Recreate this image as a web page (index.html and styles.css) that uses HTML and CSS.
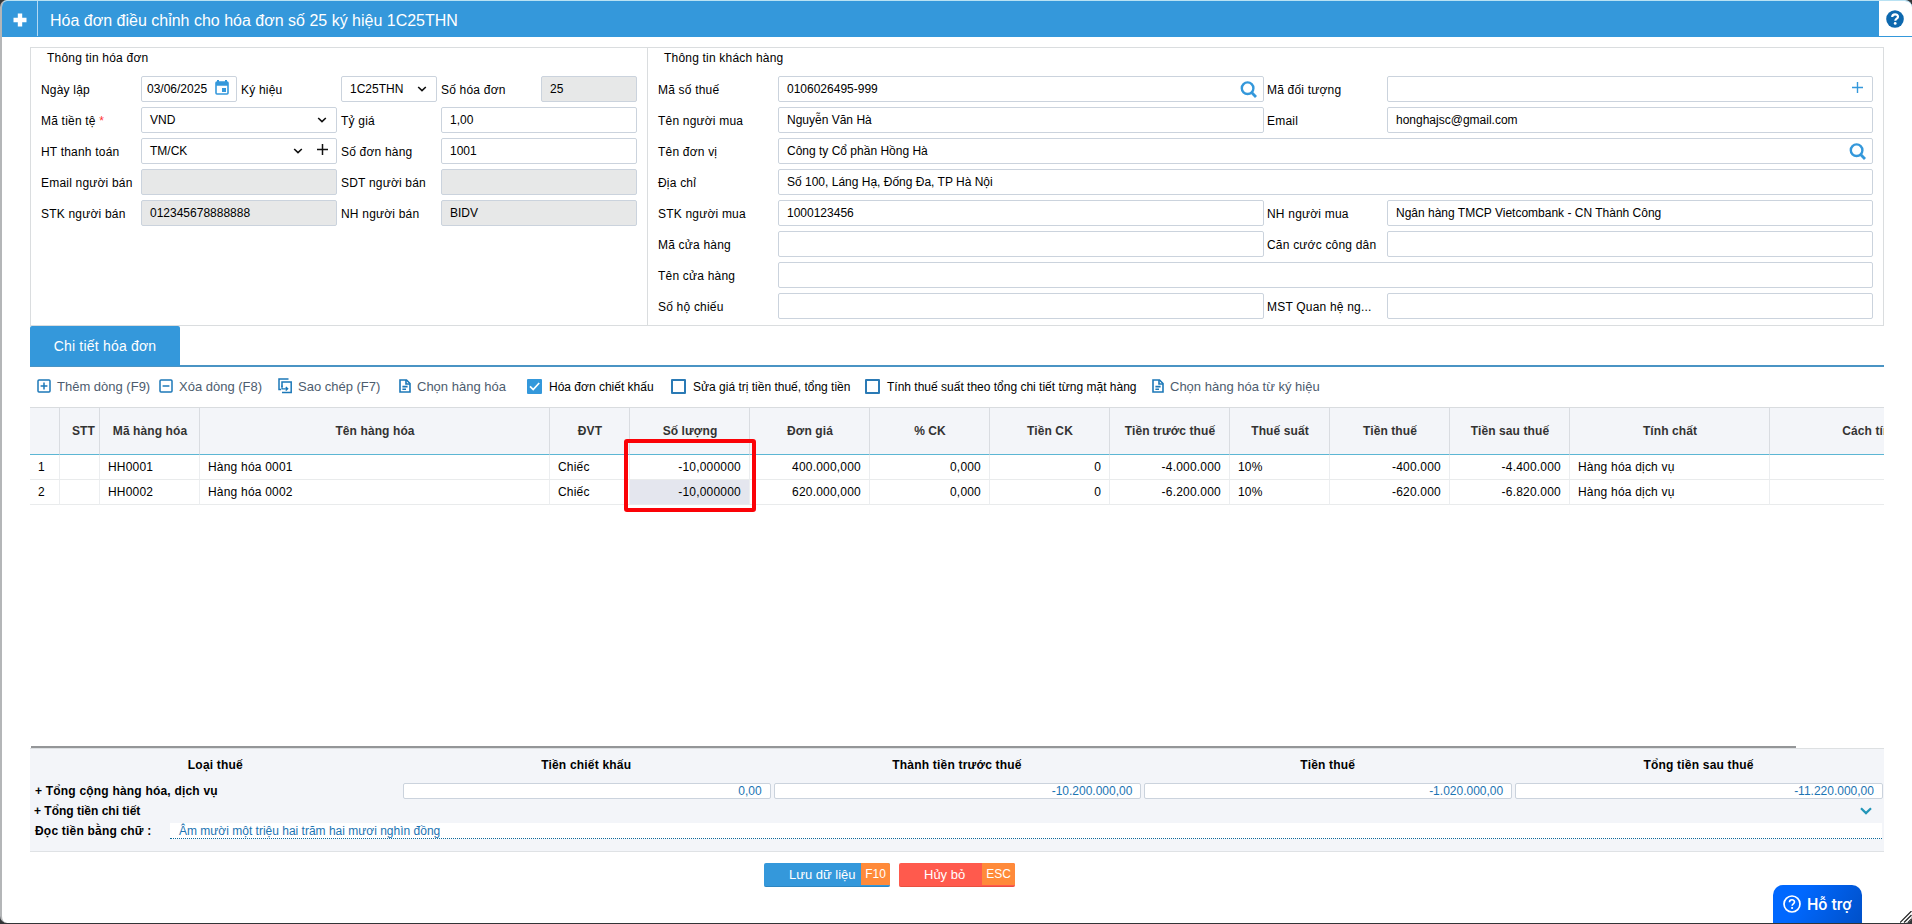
FILE: index.html
```
<!doctype html>
<html lang="vi">
<head>
    <meta charset="UTF-8">
    <title>Hóa đơn điều chỉnh</title>
    <link rel="stylesheet" href="styles.css">
</head>
<body>
<div class="window">
    <header class="titleBar">
        <div class="titlePlus">
            <svg width="14" height="14" viewBox="0 0 14 14"><path d="M7 .5v13M.5 7h13" stroke="#fff" stroke-width="4.4"/></svg>
        </div>
        <div class="title">Hóa đơn điều chỉnh cho hóa đơn số 25 ký hiệu 1C25THN</div>
        <div class="help">
            <svg width="18" height="18" viewBox="0 0 18 18"><circle cx="9" cy="9" r="8.8" fill="#0d68ae"/><path d="M6.2 7c0-3.6 5.8-3.4 5.8-.3 0 2-2.7 1.9-2.7 4" fill="none" stroke="#fff" stroke-width="2.2"/><circle cx="9.2" cy="13.4" r="1.4" fill="#fff"/></svg>
        </div>
    </header>

    <main class="content">
        <section class="info">
            <div class="group invoice">
                <div class="legend">Thông tin hóa đơn</div>
                <div class="fields invoiceFields">
                    <label>Ngày lập</label>
                    <div class="field date">03/06/2025
                        <svg class="calendar" width="14" height="15" viewBox="0 0 14 15"><path d="M3 0v3M11 0v3" stroke="#3498db" stroke-width="2"/><rect x="1" y="2" width="12" height="12" rx="1" fill="#fff" stroke="#3498db" stroke-width="1.6"/><path d="M1 2h12v3.8H1z" fill="#3498db"/><path d="M7 8h4v4H7z" fill="#3498db"/></svg>
                    </div>
                    <label>Ký hiệu</label>
                    <div class="field symbol">1C25THN
                        <svg class="arrow" width="10" height="6" viewBox="0 0 10 6"><path d="M1.2 1l3.8 3.6L8.8 1" fill="none" stroke="#111" stroke-width="1.6"/></svg>
                    </div>
                    <label>Số hóa đơn</label>
                    <div class="field disabled">25</div>

                    <label>Mã tiền tệ <span class="required">*</span></label>
                    <div class="field wide">VND
                        <svg class="arrow" width="10" height="6" viewBox="0 0 10 6"><path d="M1.2 1l3.8 3.6L8.8 1" fill="none" stroke="#111" stroke-width="1.6"/></svg>
                    </div>
                    <label>Tỷ giá</label>
                    <div class="field wide">1,00</div>

                    <label>HT thanh toán</label>
                    <div class="field wide">TM/CK
                        <svg class="arrow" width="10" height="6" viewBox="0 0 10 6"><path d="M1.2 1l3.8 3.6L8.8 1" fill="none" stroke="#111" stroke-width="1.6"/></svg>
                        <svg class="add" width="11" height="11" viewBox="0 0 11 11"><path d="M5.5 0v11M0 5.5h11" stroke="#111" stroke-width="1.5"/></svg>
                    </div>
                    <label>Số đơn hàng</label>
                    <div class="field wide">1001</div>

                    <label>Email người bán</label>
                    <div class="field wide disabled"></div>
                    <label>SDT người bán</label>
                    <div class="field wide disabled"></div>

                    <label>STK người bán</label>
                    <div class="field wide disabled">012345678888888</div>
                    <label>NH người bán</label>
                    <div class="field wide disabled">BIDV</div>
                </div>
            </div>

            <div class="group customer">
                <div class="legend">Thông tin khách hàng</div>
                <div class="fields customerFields">
                    <label>Mã số thuế</label>
                    <div class="field">0106026495-999
                        <svg class="search" width="17" height="17" viewBox="0 0 17 17"><circle cx="7.6" cy="7.2" r="5.8" fill="none" stroke="#3498db" stroke-width="2.4"/><path d="M11.4 11.2l4.6 4.8" stroke="#3498db" stroke-width="2.8"/></svg>
                    </div>
                    <label>Mã đối tượng</label>
                    <div class="field">
                        <svg class="addObject" width="11" height="11" viewBox="0 0 11 11"><path d="M5.5 0v11M0 5.5h11" stroke="#3498db" stroke-width="1.4"/></svg>
                    </div>

                    <label>Tên người mua</label>
                    <div class="field">Nguyễn Văn Hà</div>
                    <label>Email</label>
                    <div class="field">honghajsc@gmail.com</div>

                    <label>Tên đơn vị</label>
                    <div class="field full">Công ty Cổ phần Hồng Hà
                        <svg class="search" width="17" height="17" viewBox="0 0 17 17"><circle cx="7.6" cy="7.2" r="5.8" fill="none" stroke="#3498db" stroke-width="2.4"/><path d="M11.4 11.2l4.6 4.8" stroke="#3498db" stroke-width="2.8"/></svg>
                    </div>

                    <label>Địa chỉ</label>
                    <div class="field full">Số 100, Láng Hạ, Đống Đa, TP Hà Nội</div>

                    <label>STK người mua</label>
                    <div class="field">1000123456</div>
                    <label>NH người mua</label>
                    <div class="field">Ngân hàng TMCP Vietcombank - CN Thành Công</div>

                    <label>Mã cửa hàng</label>
                    <div class="field"></div>
                    <label>Căn cước công dân</label>
                    <div class="field"></div>

                    <label>Tên cửa hàng</label>
                    <div class="field full"></div>

                    <label>Số hộ chiếu</label>
                    <div class="field"></div>
                    <label>MST Quan hệ ng...</label>
                    <div class="field"></div>
                </div>
            </div>
        </section>

        <nav class="tabs">
            <div class="tab">Chi tiết hóa đơn</div>
        </nav>

        <div class="toolbar">
            <div class="tool addRow">
                <svg width="14" height="14" viewBox="0 0 14 14" fill="none" stroke="#1c78b8" stroke-width="1.5"><rect x="1" y="1" width="12" height="12" rx="1"/><path d="M7 3.6v6.8M3.6 7h6.8"/></svg>
                <span>Thêm dòng (F9)</span>
            </div>
            <div class="tool removeRow">
                <svg width="14" height="14" viewBox="0 0 14 14" fill="none" stroke="#1c78b8" stroke-width="1.5"><rect x="1" y="1" width="12" height="12" rx="1"/><path d="M3.6 7h6.8"/></svg>
                <span>Xóa dòng (F8)</span>
            </div>
            <div class="tool copyRow">
                <svg width="14" height="16" viewBox="0 0 14 16" fill="none" stroke="#1c78b8" stroke-width="1.5"><path d="M10.5 1H1v10.5h2"/><path d="M4 9V4h9.2v10.6H4"/><path d="M4 7.5v3.3h5.6M7.8 9l1.9 1.8-1.9 1.8" stroke-width="1.3"/></svg>
                <span>Sao chép (F7)</span>
            </div>
            <div class="tool pickItem">
                <svg width="12" height="14" viewBox="0 0 12 14" fill="none" stroke="#1c78b8" stroke-width="1.6"><path d="M1 1h6.5L11 4.5V13H1z"/><path d="M7 1v4h4M3.4 7.6h5.2M3.4 10.3h3.6"/></svg>
                <span>Chọn hàng hóa</span>
            </div>
            <div class="check discount">
                <span class="box checked"><svg width="15" height="15" viewBox="0 0 15 15"><path d="M3 7.4l3.2 3.2L12.2 4" fill="none" stroke="#fff" stroke-width="1.7"/></svg></span>
                <span>Hóa đơn chiết khấu</span>
            </div>
            <div class="check editTax">
                <span class="box"></span>
                <span>Sửa giá trị tiền thuế, tổng tiền</span>
            </div>
            <div class="check calcTax">
                <span class="box"></span>
                <span>Tính thuế suất theo tổng chi tiết từng mặt hàng</span>
            </div>
            <div class="tool pickSymbol">
                <svg width="12" height="14" viewBox="0 0 12 14" fill="none" stroke="#1c78b8" stroke-width="1.6"><path d="M1 1h6.5L11 4.5V13H1z"/><path d="M7 1v4h4M3.4 7.6h5.2M3.4 10.3h3.6"/></svg>
                <span>Chọn hàng hóa từ ký hiệu</span>
            </div>
        </div>

        <div class="grid">
            <table>
                <colgroup>
                    <col class="w30"><col class="w40"><col class="w100"><col class="w350"><col class="w80">
                    <col class="w120"><col class="w120"><col class="w120"><col class="w120"><col class="w120">
                    <col class="w100"><col class="w120"><col class="w120"><col class="w200"><col class="w200">
                </colgroup>
                <thead>
                <tr>
                    <th></th>
                    <th class="stt">STT</th>
                    <th>Mã hàng hóa</th>
                    <th>Tên hàng hóa</th>
                    <th>ĐVT</th>
                    <th>Số lượng</th>
                    <th>Đơn giá</th>
                    <th>% CK</th>
                    <th>Tiền CK</th>
                    <th>Tiền trước thuế</th>
                    <th>Thuế suất</th>
                    <th>Tiền thuế</th>
                    <th>Tiền sau thuế</th>
                    <th>Tính chất</th>
                    <th>Cách tính</th>
                </tr>
                </thead>
                <tbody>
                <tr>
                    <td>1</td>
                    <td></td>
                    <td>HH0001</td>
                    <td>Hàng hóa 0001</td>
                    <td>Chiếc</td>
                    <td class="num">-10,000000</td>
                    <td class="num">400.000,000</td>
                    <td class="num">0,000</td>
                    <td class="num">0</td>
                    <td class="num">-4.000.000</td>
                    <td>10%</td>
                    <td class="num">-400.000</td>
                    <td class="num">-4.400.000</td>
                    <td>Hàng hóa dịch vụ</td>
                    <td></td>
                </tr>
                <tr>
                    <td>2</td>
                    <td></td>
                    <td>HH0002</td>
                    <td>Hàng hóa 0002</td>
                    <td>Chiếc</td>
                    <td class="num selected">-10,000000</td>
                    <td class="num">620.000,000</td>
                    <td class="num">0,000</td>
                    <td class="num">0</td>
                    <td class="num">-6.200.000</td>
                    <td>10%</td>
                    <td class="num">-620.000</td>
                    <td class="num">-6.820.000</td>
                    <td>Hàng hóa dịch vụ</td>
                    <td></td>
                </tr>
                </tbody>
            </table>
            <div class="scrollThumb"></div>
        </div>
        <div class="highlight"></div>

        <section class="summary">
            <div class="summaryRow summaryHead">
                <div>Loại thuế</div>
                <div>Tiền chiết khấu</div>
                <div>Thành tiền trước thuế</div>
                <div>Tiền thuế</div>
                <div>Tổng tiền sau thuế</div>
            </div>
            <div class="summaryRow totals">
                <div class="name">+ Tổng cộng hàng hóa, dịch vụ</div>
                <div class="amount">0,00</div>
                <div class="amount">-10.200.000,00</div>
                <div class="amount">-1.020.000,00</div>
                <div class="amount">-11.220.000,00</div>
            </div>
            <div class="details">
                <div class="name">+ Tổng tiền chi tiết</div>
                <svg width="12" height="8" viewBox="0 0 12 8"><path d="M1 1.2l5 4.9 5-4.9" fill="none" stroke="#2496b8" stroke-width="2.2"/></svg>
            </div>
            <div class="words">
                <div class="name">Đọc tiền bằng chữ :</div>
                <div class="wordsText">Âm mười một triệu hai trăm hai mươi nghìn đồng</div>
            </div>
        </section>

        <div class="actions">
            <button class="save"><span class="caption">Lưu dữ liệu</span><span class="key">F10</span></button>
            <button class="cancel"><span class="caption">Hủy bỏ</span><span class="key">ESC</span></button>
        </div>
    </main>

    <div class="support">
        <svg width="18" height="18" viewBox="0 0 18 18"><circle cx="9" cy="9" r="8" fill="none" stroke="#fff" stroke-width="1.7"/><path d="M6.5 7.2c0-3.2 5-3.1 5-.2 0 1.8-2.4 1.8-2.4 3.7" fill="none" stroke="#fff" stroke-width="1.6"/><circle cx="9.1" cy="13" r="1.1" fill="#fff"/></svg>
        <span>Hỗ trợ</span>
    </div>
    <svg class="resize" width="12" height="12" viewBox="0 0 12 12"><path d="M0 11.5L11.5 0M4 11.5L11.5 4M8 11.5L11.5 8" stroke="#222" stroke-width="1.2"/></svg>
</div>
</body>
</html>
```

FILE: styles.css
```
* {
    box-sizing: border-box;
}

body {
    margin: 0;
    background: #333537;
    font-family: "Liberation Sans", Arial, sans-serif;
    font-size: 12px;
    color: #000;
}

svg {
    display: block;
    flex-shrink: 0;
}

.window {
    position: relative;
    height: 923px;
    border-top: 1px solid #b9e2f3;
    border-left: 2px solid #b4b6b8;
    border-radius: 7px;
    background: #fff;
    overflow: hidden;
}

.titleBar {
    display: flex;
    height: 36px;
    background: #3498db;
    color: #fff;
}

.titlePlus {
    display: flex;
    align-items: center;
    justify-content: center;
    width: 36px;
    height: 35px;
    padding-left: 1px;
    padding-top: 2px;
    border-right: 1px solid #b3d9f3;
}

.title {
    flex: 1;
    padding-left: 12px;
    font-size: 16px;
    line-height: 39px;
}

.help {
    display: flex;
    align-items: center;
    width: 33px;
    height: 35px;
    padding-left: 7px;
    background: #fff;
}

.content {
    width: 1854px;
    margin: 10px 0 0 28px;
}

.info {
    display: flex;
    height: 279px;
    border: 1px solid #dadddf;
}

.group {
    padding-top: 2px;
}

.invoice {
    width: 617px;
    padding-left: 10px;
    border-right: 1px solid #dadddf;
}

.customer {
    padding-left: 10px;
}

.legend {
    height: 26px;
    padding-left: 6px;
    line-height: 16px;
    letter-spacing: 0.2px;
}

.fields {
    display: grid;
    grid-auto-rows: 26px;
    row-gap: 5px;
}

.invoiceFields {
    grid-template-columns: repeat(6, 100px);
}

.customerFields {
    grid-template-columns: 120px 489px 120px 489px;
}

.fields label {
    line-height: 28px;
    letter-spacing: 0.2px;
    white-space: nowrap;
}

.required {
    color: #f33;
}

.field {
    display: flex;
    margin-right: 3px;
    padding-left: 8px;
    border: 1px solid #cbd3dd;
    border-radius: 2px;
    line-height: 25px;
    background: #fff;
}

.invoiceFields .field {
    margin-right: 4px;
}

.wide {
    grid-column: span 2;
}

.full {
    grid-column: span 3;
}

.disabled {
    background: #e7e8e8;
}

.date {
    padding-left: 5px;
}

.symbol {
    padding-left: 8px;
}

.calendar {
    margin: 3px 7px 0 auto;
}

.arrow {
    margin: 9px 9px 0 auto;
}

.add {
    margin: 5px 8px 0 5px;
}

.search {
    margin: 4px 6px 0 auto;
}

.addObject {
    margin: 5px 9px 0 auto;
}

.tabs {
    display: flex;
    height: 41px;
    border-bottom: 2px solid #4a94c4;
}

.tab {
    width: 150px;
    height: 40px;
    border-radius: 2px 2px 0 0;
    background: #3498db;
    color: #fff;
    font-size: 14px;
    letter-spacing: 0.2px;
    line-height: 40px;
    text-align: center;
}

.toolbar {
    display: flex;
    align-items: center;
    height: 40px;
    padding: 0 0 2px 7px;
}

.tool,
.check {
    display: flex;
    align-items: center;
    flex-shrink: 0;
    gap: 6px;
    white-space: nowrap;
}

.tool {
    color: #4d5c6e;
    font-size: 13px;
}

.addRow {
    width: 122px;
}

.removeRow {
    width: 119px;
}

.copyRow {
    width: 121px;
}

.pickItem {
    width: 128px;
}

.check {
    gap: 7px;
    padding-top: 1px;
}

.discount {
    width: 144px;
}

.editTax {
    width: 194px;
}

.calcTax {
    width: 287px;
}

.box {
    width: 15px;
    height: 15px;
    border: 2px solid #2a7ab5;
    border-radius: 1px;
}

.checked {
    border: 0;
    background: #3498db;
}

.grid {
    display: flex;
    flex-direction: column;
    justify-content: space-between;
    height: 341px;
    overflow: hidden;
}

table {
    width: 1940px;
    table-layout: fixed;
    border-collapse: separate;
    border-spacing: 0;
}

.w30 {
    width: 30px;
}

.w40 {
    width: 40px;
}

.w80 {
    width: 80px;
}

.w100 {
    width: 100px;
}

.w120 {
    width: 120px;
}

.w200 {
    width: 200px;
}

.w350 {
    width: 350px;
}

th {
    height: 48px;
    padding: 0 0 0 1px;
    border-top: 1px solid #d9dcdf;
    border-right: 1px solid #d9dce1;
    border-bottom: 1px solid #5cb6d4;
    background: #f3f5f9;
    color: #333;
    letter-spacing: 0.1px;
}

.stt {
    padding-left: 8px;
}

td {
    height: 25px;
    padding: 0 8px;
    border-right: 1px solid #eceef0;
    border-bottom: 1px solid #e9ebec;
    letter-spacing: 0.2px;
    line-height: 24px;
    white-space: nowrap;
}

.num {
    text-align: right;
}

.selected {
    background: #e4e6ee;
}

.scrollThumb {
    width: 1765px;
    height: 2px;
    margin-left: 1px;
    background: #949698;
}

.highlight {
    position: absolute;
    left: 622px;
    top: 438px;
    width: 132px;
    height: 73px;
    border: 4px solid #fb0207;
    border-radius: 3px;
}

.summary {
    height: 104px;
    border-top: 1px solid #dde0e2;
    border-bottom: 1px solid #dfe2e5;
    background: #f3f5f9;
}

.summaryRow {
    display: grid;
    grid-template-columns: repeat(5, 1fr);
}

.summaryHead {
    height: 34px;
    font-weight: bold;
    letter-spacing: 0.2px;
    line-height: 33px;
    text-align: center;
}

.name {
    padding-left: 5px;
    font-weight: bold;
    letter-spacing: 0.2px;
    line-height: 16px;
}

.amount {
    height: 16px;
    margin: 0 1px 0 2px;
    padding-right: 8px;
    border: 1px solid #cbd3dd;
    border-radius: 2px;
    background: #fff;
    color: #1b74b3;
    line-height: 14px;
    text-align: right;
}

.details {
    display: flex;
    align-items: center;
    justify-content: space-between;
    height: 24px;
    padding-right: 12px;
}

.details .name {
    padding-left: 4px;
    letter-spacing: 0;
}

.words {
    display: flex;
}

.words .name {
    width: 140px;
}

.wordsText {
    flex: 1;
    height: 16px;
    margin-right: 2px;
    padding-left: 9px;
    border-bottom: 1px dotted #0d6a9a;
    background: #fff;
    color: #1b74b3;
    line-height: 16px;
}

.actions {
    display: flex;
    gap: 9px;
    padding: 11px 0 0 734px;
}

.actions button {
    display: flex;
    height: 24px;
    padding: 0;
    border: 0;
    border-radius: 2px;
    overflow: hidden;
    color: #fff;
    font-family: inherit;
    font-size: 13px;
    line-height: 24px;
}

.actions .save {
    width: 126px;
    background: #3498db;
    border-bottom: 1px solid #2d86c1;
}

.actions .cancel {
    width: 116px;
    background: #ff5a4d;
    border-bottom: 1px solid #e8503f;
}

.caption {
    flex: 1;
    padding-left: 25px;
    text-align: left;
}

.key {
    width: 29px;
    height: 22px;
    background: #ff8a3a;
    font-size: 12px;
    line-height: 22px;
}

.cancel .key {
    width: 33px;
}

.support {
    position: absolute;
    left: 1771px;
    bottom: 0;
    display: flex;
    align-items: center;
    gap: 6px;
    width: 89px;
    height: 38px;
    padding-left: 10px;
    border-radius: 10px 10px 0 0;
    background: linear-gradient(120deg, #0068ff 30%, #0050c8);
    color: #fff;
    font-family: Roboto, sans-serif;
    font-size: 16px;
    font-weight: 500;
}

.resize {
    position: absolute;
    right: 0;
    bottom: 0;
}
```
